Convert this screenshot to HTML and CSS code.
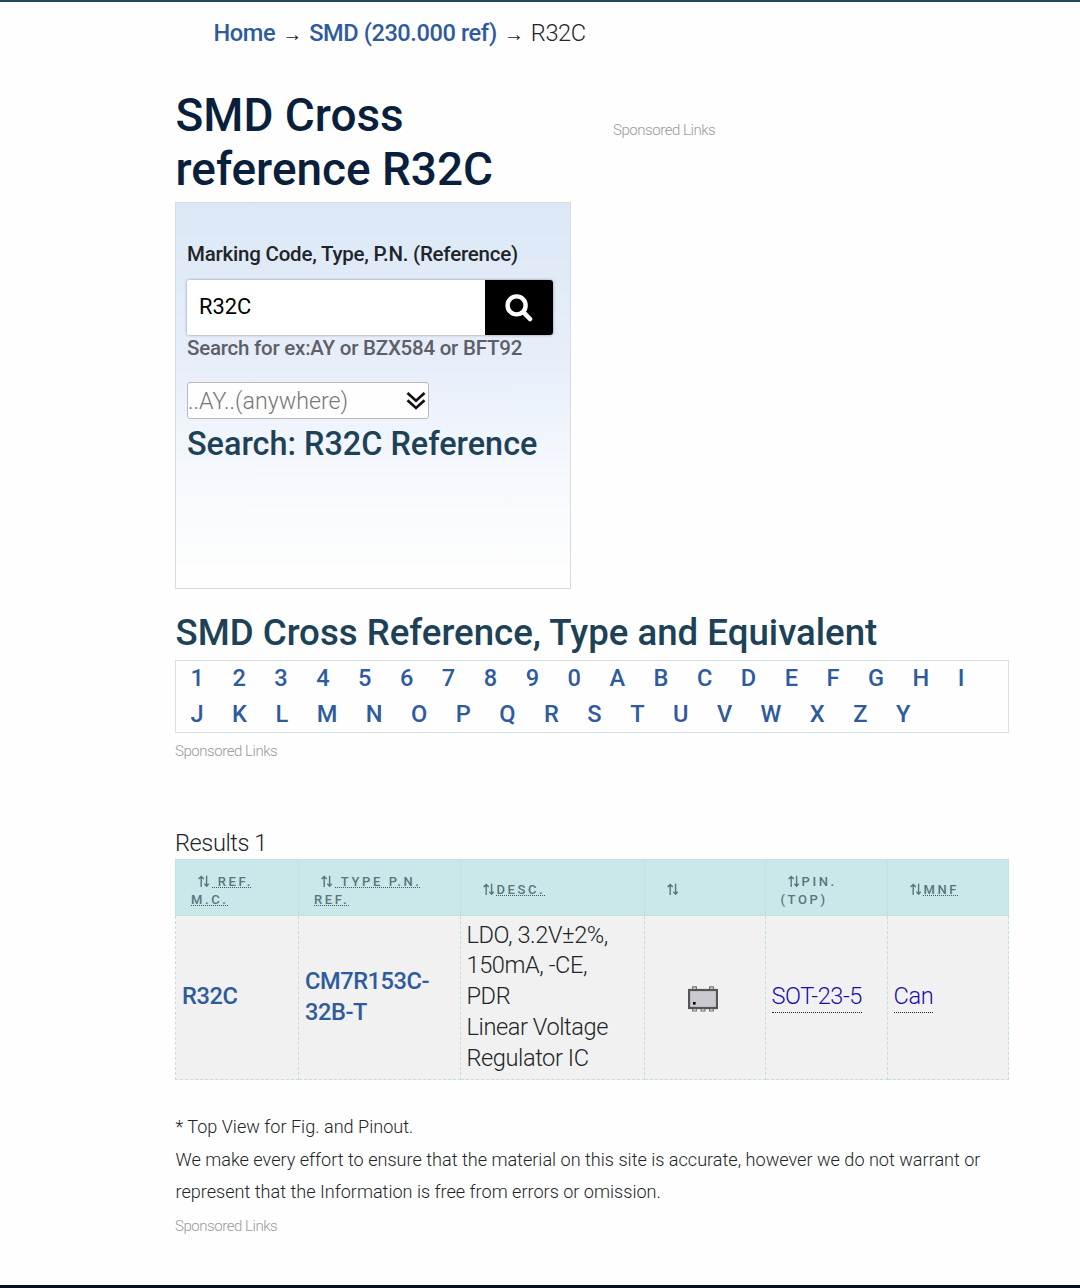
FILE: index.html
```html
<!DOCTYPE html>
<html lang="en">
<head>
<meta charset="utf-8">
<title>R32C SMD Cross reference</title>
<link rel="stylesheet" href="styles.css">
</head>
<body>
<svg class="defs" width="0" height="0" aria-hidden="true">
  <symbol id="sort" viewBox="0 0 11 13"><path d="M3.2 12V1.6M.6 4.1 3.2 1.5 5.8 4.1M8.6 .8V11M6.4 8.8 8.6 11.2 10.8 8.8" fill="none" stroke="currentColor" stroke-width="1.4"/></symbol>
</svg>
<div class="page">
  <nav class="crumbs"><a href="#">Home</a><span class="arrow">→</span><a href="#">SMD (230.000 ref)</a><span class="arrow">→</span><span>R32C</span></nav>
  <main class="content">
    <div class="intro">
      <section class="lookup">
        <h1>SMD Cross<br>reference R32C</h1>
        <form class="panel">
          <label class="label" for="code">Marking Code, Type, P.N. (Reference)</label>
          <div class="search">
            <input id="code" type="text" value="R32C">
            <button type="button" aria-label="Search"><svg width="28" height="28" viewBox="0 0 28 28"><circle cx="11.6" cy="11.4" r="9" fill="none" stroke="#fff" stroke-width="4.4"/><path d="M18.6 18.4 25 25" stroke="#fff" stroke-width="4.6" stroke-linecap="round"/></svg></button>
          </div>
          <div class="hint">Search for ex:AY or BZX584 or BFT92</div>
          <div class="select"><span>..AY..(anywhere)</span><svg width="20" height="20" viewBox="0 0 20 20"><path d="M1.5 2 10 9.7 18.5 2M1.5 9.3 10 17 18.5 9.3" fill="none" stroke="#111" stroke-width="2.7"/></svg></div>
          <h3>Search: R32C Reference</h3>
        </form>
      </section>
      <aside class="sponsored side">Sponsored Links</aside>
    </div>
    <h2>SMD Cross Reference, Type and Equivalent</h2>
    <div class="index">
      <div class="line"><a>1</a><a>2</a><a>3</a><a>4</a><a>5</a><a>6</a><a>7</a><a>8</a><a>9</a><a>0</a><a>A</a><a>B</a><a>C</a><a>D</a><a>E</a><a>F</a><a>G</a><a>H</a><a>I</a></div>
      <div class="line"><a>J</a><a>K</a><a>L</a><a>M</a><a>N</a><a>O</a><a>P</a><a>Q</a><a>R</a><a>S</a><a>T</a><a>U</a><a>V</a><a>W</a><a>X</a><a>Z</a><a>Y</a></div>
    </div>
    <div class="sponsored">Sponsored Links</div>
    <div class="results">Results 1</div>
    <table>
      <colgroup><col class="c1"><col class="c2"><col class="c3"><col class="c4"><col class="c5"><col class="c6"></colgroup>
      <thead><tr>
        <th><svg class="sort"><use href="#sort"/></svg><abbr>&nbsp;Ref.<br>M.C.</abbr></th>
        <th><svg class="sort"><use href="#sort"/></svg><abbr>&nbsp;Type P.N.<br>Ref.</abbr></th>
        <th class="single"><svg class="sort"><use href="#sort"/></svg><abbr>Desc.</abbr></th>
        <th class="single"><svg class="sort"><use href="#sort"/></svg></th>
        <th><svg class="sort"><use href="#sort"/></svg>Pin.<br>(Top)</th>
        <th class="single"><svg class="sort"><use href="#sort"/></svg><abbr>MNF</abbr></th>
      </tr></thead>
      <tbody><tr>
        <td class="part">R32C</td>
        <td class="part">CM7R153C-<br>32B-T</td>
        <td>LDO, 3.2V±2%,<br>150mA, -CE,<br>PDR<br>Linear Voltage<br>Regulator IC</td>
        <td class="fig"><svg width="30" height="26" viewBox="0 0 30 26"><path d="M4.6 4V.8H8.4V4M21.6 4V.8H25.4V4M4.6 22V25H8.4V22M13.1 22V25H16.9V22M21.6 22V25H25.4V22" fill="#ddd" stroke="#777" stroke-width="1.2"/><rect x="1" y="4" width="28" height="18" fill="#cbcad1" stroke="#555" stroke-width="2.2"/><rect x="5" y="16" width="2.6" height="2.6" fill="#000"/></svg></td>
        <td><a class="term">SOT-23-5</a></td>
        <td><a class="term">Can</a></td>
      </tr></tbody>
    </table>
    <p>* Top View for Fig. and Pinout.<br>We make every effort to ensure that the material on this site is accurate, however we do not warrant or<br>represent that the Information is free from errors or omission.</p>
    <div class="sponsored">Sponsored Links</div>
  </main>
</div>
</body>
</html>
```
FILE: styles.css
```css
* { box-sizing: border-box; }
body { margin: 0; background: #fefefe; color: #212529; font-family: Roboto, "Liberation Sans", sans-serif; font-size: 23.6px; letter-spacing: -.42px; font-weight: 300; white-space: nowrap; }
.defs { display: block; }
.page { height: 1288px; overflow: hidden; border-top: 2px solid #24455b; border-bottom: 3px solid #04101f; }
a { color: #2f5b9d; text-decoration: none; }
h1, h2, h3 { margin: 0; font-weight: 500; letter-spacing: 0; color: #1d4257; }

.crumbs { display: flex; height: 50px; padding: 16px 0 0 213.5px; line-height: 30px; }
.crumbs a, .part { font-weight: 500; }
.arrow { width: 34px; padding-top: 1px; text-align: center; font: 20px/30px "Liberation Serif", serif; }

.content { width: 834px; margin-left: 175px; }
.intro { display: flex; gap: 42px; height: 532px; padding-top: 36px; }
.lookup { width: 396px; }
h1 { height: 114px; padding-left: .5px; color: #0a1f3c; font-size: 45.9px; line-height: 54px; }
.panel { height: 387px; padding: 36px 17px 0 11px; border: 1px solid #d8dcdf; background: linear-gradient(#dce8f6, #e7eefa 40%, #f6f9fd 72%, #fefefe 96%); }
.label { display: block; height: 41px; font-size: 20.5px; letter-spacing: -.22px; font-weight: 500; line-height: 30px; }
.search { display: flex; height: 55px; border-radius: 3px; box-shadow: 0 0 3px rgba(0,0,0,.4); }
.search input { width: 298px; padding: 0 12px 2px; border: 0; border-radius: 3px 0 0 3px; background: #fff; color: #000; font: 21.8px Roboto, sans-serif; }
.search button { display: flex; align-items: center; justify-content: center; width: 68px; padding: 0; border: 0; border-radius: 0 3px 3px 0; background: #000; }
.hint { height: 47px; color: #5c6066; font-size: 20.5px; letter-spacing: -.23px; font-weight: 500; line-height: 27px; }
.select { display: flex; align-items: center; justify-content: space-between; width: 242px; height: 37px; padding-right: 2px; border: 1px solid #bbb; border-radius: 3px; background: #fefefe; color: #777; font-size: 23.2px; letter-spacing: 0; }
h3 { font-size: 32.4px; line-height: 50px; }
.sponsored { color: #999; font-size: 15px; letter-spacing: -.45px; line-height: 20px; }
.side { padding-top: 32px; }

h2 { font-size: 36.63px; line-height: 48px; padding: 25px 0 0 .5px; height: 76px; }
.index { height: 73px; margin-bottom: 8px; border: 1px solid #d5e2e3; }
.line { display: flex; gap: 28.9px; height: 36px; padding-left: 14.5px; line-height: 35px; font-weight: 500; }
.results { padding-top: 67px; height: 98px; line-height: 30px; }

table { width: 833px; margin-right: 1px; table-layout: fixed; border-collapse: collapse; }
.c1 { width: 123px; } .c2 { width: 162px; } .c3 { width: 184px; } .c4 { width: 121px; } .c5 { width: 122px; } .c6 { width: 121px; }
th { height: 56px; padding: 7px 0 0 15px; border: 1px solid #c5e0e1; background: #cae7e9; color: #56777b; font-size: 13px; font-weight: 500; letter-spacing: 2.6px; line-height: 18px; text-align: left; text-transform: uppercase; }
th:nth-child(n+3) { padding-left: 14.5px; }
th.single { padding-top: 5px; }
abbr { text-decoration: underline dotted #365d62 1px; text-underline-offset: 1px; text-decoration-skip-ink: none; }
.sort { width: 11px; height: 13px; margin: 0 3px 0 7px; vertical-align: -2px; }
td { height: 164px; padding: 0 0 2px 6px; border: 1px dashed #bfdfe4; background: #f1f1f1; line-height: 30.7px; }
td:nth-child(n+3) { padding-left: 5.5px; }
.part { color: #2f5b9d; }
td.fig:nth-child(4) { padding: 3px 8px 0 0; }
.fig svg { display: block; margin: 0 auto; }
td:nth-child(4) svg { margin-left: 42.5px; }
.term { color: #1a0dab; border-bottom: 1px dotted #222; padding-bottom: 2px; }
p { margin: 31px 0 7px; padding-left: .5px; font-size: 18.08px; letter-spacing: 0; line-height: 32.6px; }
```
